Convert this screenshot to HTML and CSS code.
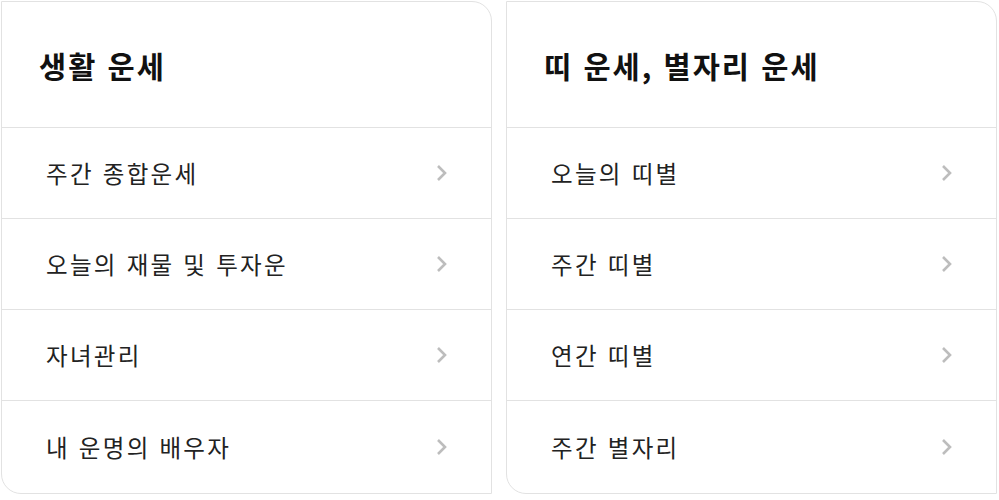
FILE: index.html
```html
<!DOCTYPE html>
<html lang="ko">
<head>
<meta charset="utf-8">
<link rel="stylesheet" href="styles.css">
</head>
<body>
<div class="page">
  <section class="card">
    <h2 class="card-title">생활 운세</h2>
    <ul class="menu">
      <li class="menu-item"><span>주간 종합운세</span><svg class="chev" viewBox="0 0 12 18"><path d="M2 2l7 7-7 7"/></svg></li>
      <li class="menu-item"><span>오늘의 재물 및 투자운</span><svg class="chev" viewBox="0 0 12 18"><path d="M2 2l7 7-7 7"/></svg></li>
      <li class="menu-item"><span>자녀관리</span><svg class="chev" viewBox="0 0 12 18"><path d="M2 2l7 7-7 7"/></svg></li>
      <li class="menu-item"><span>내 운명의 배우자</span><svg class="chev" viewBox="0 0 12 18"><path d="M2 2l7 7-7 7"/></svg></li>
    </ul>
  </section>
  <section class="card">
    <h2 class="card-title">띠 운세, 별자리 운세</h2>
    <ul class="menu">
      <li class="menu-item"><span>오늘의 띠별</span><svg class="chev" viewBox="0 0 12 18"><path d="M2 2l7 7-7 7"/></svg></li>
      <li class="menu-item"><span>주간 띠별</span><svg class="chev" viewBox="0 0 12 18"><path d="M2 2l7 7-7 7"/></svg></li>
      <li class="menu-item"><span>연간 띠별</span><svg class="chev" viewBox="0 0 12 18"><path d="M2 2l7 7-7 7"/></svg></li>
      <li class="menu-item"><span>주간 별자리</span><svg class="chev" viewBox="0 0 12 18"><path d="M2 2l7 7-7 7"/></svg></li>
    </ul>
  </section>
</div>
</body>
</html>
```
FILE: styles.css
```css
* { box-sizing: border-box; }
html, body { margin: 0; padding: 0; background: #fff; }
body {
  font-family: "Noto Sans CJK KR", "Noto Sans", sans-serif;
  color: #222;
}
.page {
  display: flex;
  gap: 14px;
  padding: 1px 0 0 1px;
}
.card {
  width: 491px;
  height: 493px;
  border: 1px solid #e2e2e2;
  border-radius: 0 20px 0 20px;
  overflow: hidden;
  display: flex;
  flex-direction: column;
}
.card-title {
  margin: 0;
  height: 126px;
  display: flex;
  align-items: center;
  padding-left: 37px;
  font-size: 29.5px;
  font-weight: 700;
  color: #111;
  border-bottom: 1px solid #e2e2e2;
  letter-spacing: 2px;
}
.menu {
  list-style: none;
  margin: 0;
  padding: 0;
  flex: 1;
  display: flex;
  flex-direction: column;
}
.menu-item {
  height: 91px;
  display: flex;
  align-items: center;
  justify-content: space-between;
  padding: 0 43px 0 44px;
  font-size: 23.5px;
  letter-spacing: 2.3px;
  border-bottom: 1px solid #e2e2e2;
}
.menu-item:last-child { border-bottom: none; flex: 1; }
.chev {
  width: 12px;
  height: 18px;
  fill: none;
  stroke: #bdbdbd;
  stroke-width: 2.6;
}
```
